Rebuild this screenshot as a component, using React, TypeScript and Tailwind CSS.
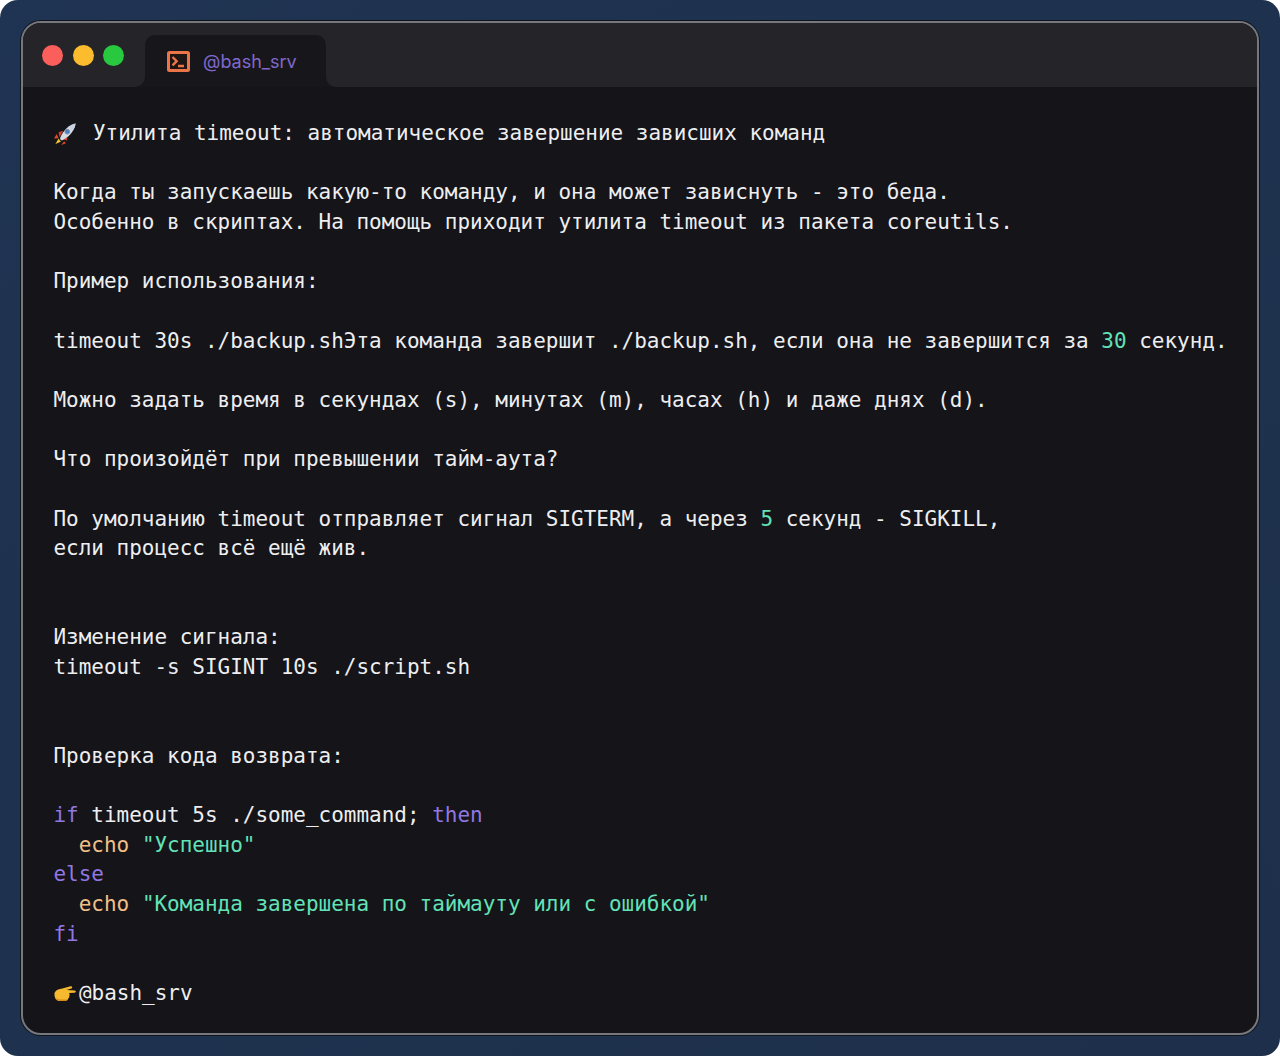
const Rocket = () => (
  <svg width="22" height="22" viewBox="0 0 24 24" className="shrink-0">
    <path d="M5 17l-3.500 6 6-2.500z" fill="#f5c02e" />
    <path d="M3 12l-3 5 5-.5z" fill="#e5482d" />
    <path d="M11 20l-3 4 5-2z" fill="#e5482d" />
    <path d="M5 10l5-1.500-4 7z" fill="#d8412f" />
    <path d="M14 19l1-5-6 3.500z" fill="#d8412f" />
    <path d="M6.500 17.500C8 11 14 3 23.500.500c-1 9.500-9.500 16-15 18.500z" fill="#d6dce6" />
    <path d="M23.500.500c-3 .8-5.700 2-8 3.700l4.300 4.300C22 6.300 23.200 3.500 23.500.500z" fill="#c9d2e0" />
    <circle cx="14.500" cy="9.500" r="2.600" fill="#4a7fc0" stroke="#7f8ea3" strokeWidth="1" />
  </svg>
);

const PointingHand = () => (
  <svg width="22" height="18" viewBox="0 0 22 18" className="shrink-0">
    <path
      d="M.500 8c1-2.500 3-3.500 5.500-4C9 3.200 13 2 16.500 1.200c1.800-.3 2.400 1.900.8 2.400L12.500 5c3 0 5.800.2 8.200.5 1.600.2 1.500 2.200-.2 2.200L15 8c.8 1 .8 2.400.2 3.200.3 1.100-.3 2-1.100 2.400 0 1.100-.9 2.100-2.200 2.200-2 .2-4 .4-6 .2C2.500 15.700.2 13.500.500 8z"
      fill="#f7b92f"
    />
    <path d="M.600 11.500c.4 2.800 2.400 4.200 5.400 4.500 2 .2 4 0 5.900-.2.800-.1 1.500-.6 1.900-1.300H6.500C4 14.500 1.800 13.500.600 11.500z" fill="#d98a1c" />
  </svg>
);

const Num = ({ children }: { children: string }) => <span className="text-[#63e2b7]">{children}</span>;
const Kw = ({ children }: { children: string }) => <span className="text-[#9277e0]">{children}</span>;
const Cmd = ({ children }: { children: string }) => <span className="text-[#f0c088]">{children}</span>;

export default function App() {
  return (
    <div className="h-[1056px] w-[1280px] overflow-hidden bg-white">
      <div className="h-full rounded-[18px] bg-gradient-to-br from-[#1f3452] to-[#1d2f4a] p-[21px]">
        <div className="flex h-[1014px] flex-col overflow-hidden rounded-[20px] border-2 border-[#77787e] bg-[#141419] shadow-[0_0_0_1px_#10141c]">
          <div className="flex h-[64px] shrink-0 items-end bg-[#252428]">
            <div className="flex h-full w-[122px] items-start gap-[9.5px] pl-[19px] pt-[22px]">
              <span className="h-[21px] w-[21px] rounded-full bg-[#fb5f5c]" />
              <span className="h-[21px] w-[21px] rounded-full bg-[#fdbc2e]" />
              <span className="h-[21px] w-[21px] rounded-full bg-[#28c83f]" />
            </div>
            <div className="relative flex h-[52px] w-[181px] items-center gap-[13px] rounded-t-[10px] bg-[#17171b] pl-[22px]">
              <span className="absolute -left-[10px] bottom-0 h-[10px] w-[10px] bg-[#17171b]">
                <span className="block h-full w-full rounded-br-[10px] bg-[#252428]" />
              </span>
              <span className="absolute -right-[10px] bottom-0 h-[10px] w-[10px] bg-[#17171b]">
                <span className="block h-full w-full rounded-bl-[10px] bg-[#252428]" />
              </span>
              <svg width="23" height="21" viewBox="0 0 23 21" className="mt-[1px] shrink-0">
                <rect x="1.500" y="1.500" width="20" height="18" rx="1" fill="#1f1512" stroke="#ec7449" strokeWidth="3" />
                <path d="M5.500 6l4.200 4.200-4.200 4.200" fill="none" stroke="#ec7449" strokeWidth="2.400" />
                <path d="M11 15h6" fill="none" stroke="#ec7449" strokeWidth="2.400" />
              </svg>
              <span className="font-['Inter',sans-serif] text-[18px] text-[#8068cc]">@bash_srv</span>
            </div>
          </div>
          <div className="flex-1 pl-[30.5px] pt-[32px] font-['DejaVu_Sans_Mono',monospace] text-[20.97px] leading-[29.65px] whitespace-pre text-[#eeeef0]">
            <div className="flex h-[29.65px] items-center"><Rocket /><span className="ml-[17.5px]">Утилита timeout: автоматическое завершение зависших команд</span></div>
            <div>{' '}</div>
            <div>Когда ты запускаешь какую-то команду, и она может зависнуть - это беда.</div>
            <div>Особенно в скриптах. На помощь приходит утилита timeout из пакета coreutils.</div>
            <div>{' '}</div>
            <div>Пример использования:</div>
            <div>{' '}</div>
            <div>timeout 30s ./backup.shЭта команда завершит ./backup.sh, если она не завершится за <Num>30</Num> секунд.</div>
            <div>{' '}</div>
            <div>Можно задать время в секундах (s), минутах (m), часах (h) и даже днях (d).</div>
            <div>{' '}</div>
            <div>Что произойдёт при превышении тайм-аута?</div>
            <div>{' '}</div>
            <div>По умолчанию timeout отправляет сигнал SIGTERM, а через <Num>5</Num> секунд - SIGKILL,</div>
            <div>если процесс всё ещё жив.</div>
            <div>{' '}</div>
            <div>{' '}</div>
            <div>Изменение сигнала:</div>
            <div>timeout -s SIGINT 10s ./script.sh</div>
            <div>{' '}</div>
            <div>{' '}</div>
            <div>Проверка кода возврата:</div>
            <div>{' '}</div>
            <div><Kw>if</Kw> timeout 5s ./some_command; <Kw>then</Kw></div>
            <div>  <Cmd>echo</Cmd> <Num>"Успешно"</Num></div>
            <div><Kw>else</Kw></div>
            <div>  <Cmd>echo</Cmd> <Num>"Команда завершена по таймауту или с ошибкой"</Num></div>
            <div><Kw>fi</Kw></div>
            <div>{' '}</div>
            <div className="flex h-[29.65px] items-center"><PointingHand /><span className="ml-[3.5px]">@bash_srv</span></div>
          </div>
        </div>
      </div>
    </div>
  );
}
